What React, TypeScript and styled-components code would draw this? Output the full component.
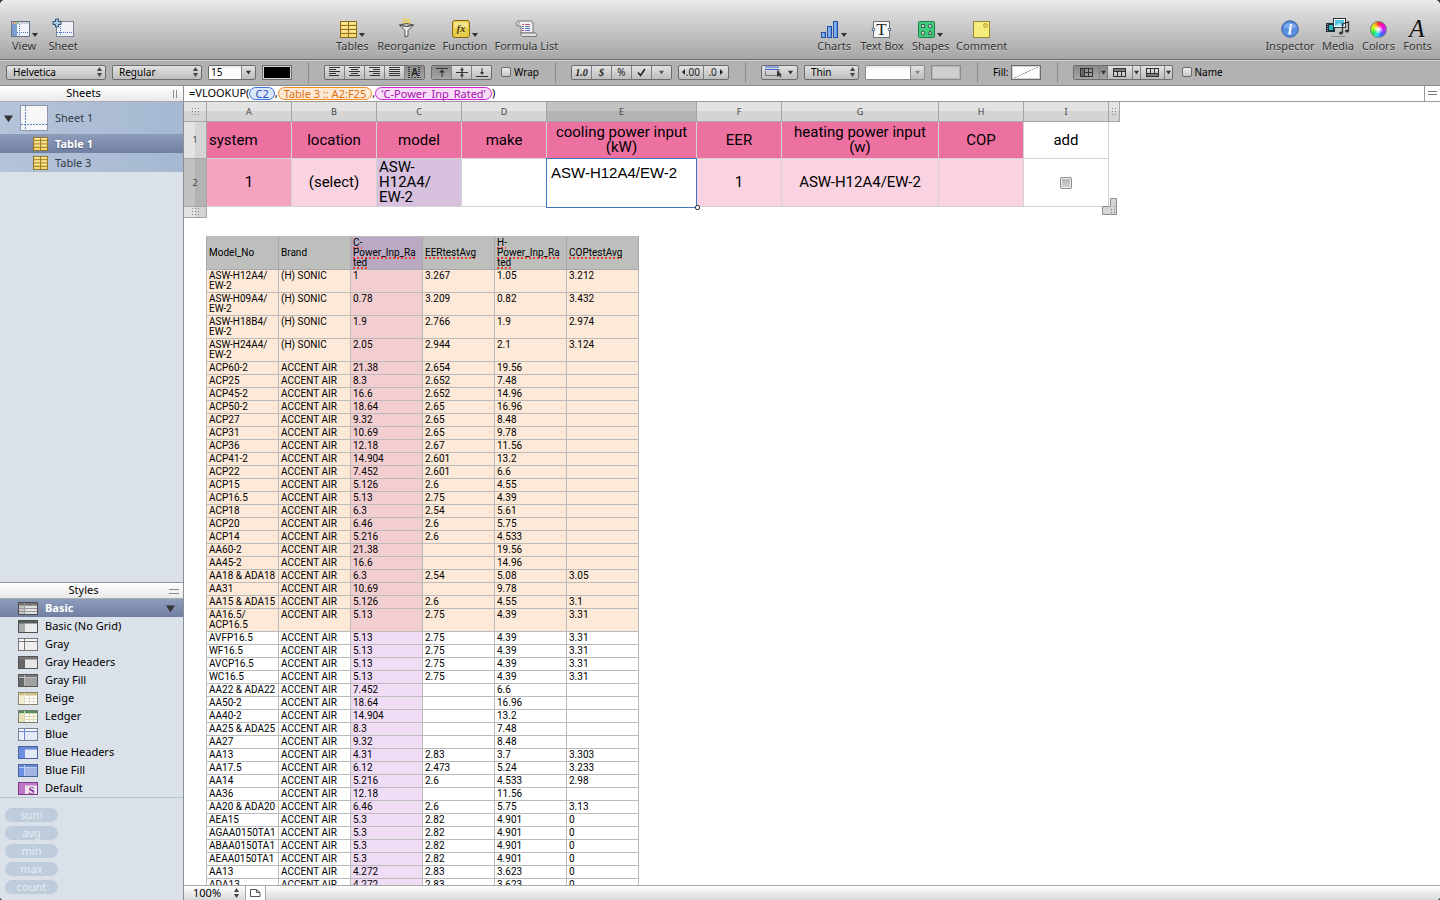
import React from "react";
import styled, { createGlobalStyle, css } from "styled-components";

const UI = `"Lucida Grande", "Noto Sans", "Open Sans", sans-serif`;
const CELL = `Roboto, "Liberation Sans", sans-serif`;

const GlobalStyle = createGlobalStyle`
  *, *::before, *::after { box-sizing: border-box; }
  html, body { margin: 0; background: #2d3240; }
  body { font-family: ${UI}; font-size: 11px; line-height: 14px; color: #000; }
  button, input, select, textarea { font: inherit; color: inherit; margin: 0; padding: 0; border-radius: 0; }
`;

/* ---------- window ---------- */
const Window = styled.div`
  display: flex;
  flex-direction: column;
  height: 100vh;
  overflow: hidden;
  background: #fff;
  border-radius: 5px 5px 4px 4px;
`;

const Toolbar = styled.header`
  display: flex;
  justify-content: space-between;
  flex: none;
  height: 60px;
  padding: 18px 4px 0 1px;
  background: linear-gradient(#ececec 0, #dcdcdc 10px, #a6a6a6 100%);
  border-bottom: 1px solid #6e6e6e;
`;

const ToolGroup = styled.div`
  display: flex;
`;

const Tool = styled.button<{ $w: number }>`
  display: flex;
  flex-direction: column;
  align-items: center;
  width: ${(p) => p.$w}px;
  height: 36px;
  border: 0;
  background: none;
  color: #333;
  white-space: nowrap;
  text-shadow: 0 1px 0 rgba(255, 255, 255, 0.45);
`;

const ToolIcon = styled.span`
  display: flex;
  align-items: flex-end;
  gap: 2px;
  height: 21px;
  padding-bottom: 1px;
  & > svg { overflow: visible; }
`;

/* ---------- format bar ---------- */
const FormatBar = styled.div`
  display: flex;
  align-items: center;
  flex: none;
  gap: 6px;
  height: 26px;
  padding: 0 6px 2px;
  background: #b2b2b2;
  border-top: 1px solid #cfcfcf;
  border-bottom: 1px solid #8b8b8b;
  font-size: 10px;
`;

const control = css`
  height: 15px;
  border: 1px solid #6d6d6d;
  border-radius: 2px;
  background: linear-gradient(#e2e2e2, #bdbdbd);
`;

const SelectBox = styled.span<{ $w: number }>`
  ${control}
  display: flex;
  align-items: center;
  width: ${(p) => p.$w}px;
  padding-right: 3px;
`;

const Select = styled.select`
  appearance: none;
  flex: 1;
  min-width: 0;
  height: 13px;
  padding-left: 6px;
  border: 0;
  background: none;
  line-height: 13px;
`;

const SizeBox = styled.span<{ $w: number; $faded?: boolean }>`
  ${control}
  display: flex;
  width: ${(p) => p.$w}px;
  ${(p) => p.$faded && "border-color: #8c8c8c;"}
`;

const SizeInput = styled.input`
  flex: 1;
  min-width: 0;
  padding-left: 2px;
  border: 0;
  border-right: 1px solid #8a8a8a;
  background: linear-gradient(#e8e8e8, #fff 4px);
  line-height: 13px;
  font-size: 10px;
`;

const MiniButton = styled.button`
  display: flex;
  align-items: center;
  justify-content: center;
  width: 13px;
  border: 0;
  background: none;
`;

const Swatch = styled.button<{ $fill: string; $faded?: boolean }>`
  width: 30px;
  height: 15px;
  border: 1px solid ${(p) => (p.$faded ? "#8c8c8c" : "#6d6d6d")};
  background: ${(p) => p.$fill};
  box-shadow: inset 0 0 0 1px ${(p) => (p.$faded ? "#b4b4b4" : "#d4d4d4")};
`;

const Divider = styled.span`
  width: 1px;
  height: 21px;
  margin: 0 9px 0 10px;
  background: #8b8b8b;
`;

const Segmented = styled.div`
  ${control}
  display: flex;
  overflow: hidden;
`;

const Segment = styled.button<{ $w?: number; $on?: boolean }>`
  display: flex;
  align-items: center;
  justify-content: center;
  width: ${(p) => p.$w ?? 20}px;
  border: 0;
  border-left: 1px solid #808080;
  background: ${(p) => (p.$on ? "linear-gradient(#8a8a8a, #a5a5a5)" : "none")};
  font-size: 10px;
  line-height: 13px;
  color: #222;
  white-space: nowrap;
  &:first-child { border-left: 0; }
`;

const Numeral = styled.i`
  font-family: "Liberation Serif", serif;
  font-weight: bold;
`;

const CheckLabel = styled.label`
  display: flex;
  align-items: center;
  gap: 3px;
  margin-left: 3px;
`;

const FillField = styled.div`
  display: flex;
  align-items: center;
  gap: 2px;
`;

const Check = styled.input`
  appearance: none;
  width: 10px;
  height: 10px;
  border: 1px solid #6a6a6a;
  border-radius: 2px;
  background: linear-gradient(#ededed, #c8c8c8);
`;

/* ---------- body ---------- */
const Body = styled.div`
  display: flex;
  flex: 1;
  min-height: 0;
`;

const Sidebar = styled.aside`
  display: flex;
  flex-direction: column;
  flex: none;
  width: 184px;
  border-right: 1px solid #8f8f8f;
  background: #dae1e9;
`;

const PaneTitle = styled.h2`
  position: relative;
  flex: none;
  height: 16px;
  margin: 0;
  background: linear-gradient(#fff, #e9e9e9);
  border-bottom: 1px solid #a9adb3;
  font-size: 11px;
  line-height: 14px;
  font-weight: normal;
  text-align: center;
  padding-right: 16px;
`;

const Grip = styled.span<{ $vertical?: boolean }>`
  position: absolute;
  right: ${(p) => (p.$vertical ? 6 : 4)}px;
  top: ${(p) => (p.$vertical ? 4 : 6)}px;
  width: ${(p) => (p.$vertical ? 4 : 10)}px;
  height: ${(p) => (p.$vertical ? 8 : 5)}px;
  border: 0 solid #8c8c8c;
  border-width: ${(p) => (p.$vertical ? "0 1px" : "1px 0")};
`;

const SheetTree = styled.ul`
  margin: 0;
  padding: 0;
  list-style: none;
  background: linear-gradient(90deg, #b4c3d9, #a6b8d2);
  color: #333b47;
`;

const SheetRow = styled.li`
  display: flex;
  align-items: center;
  gap: 6px;
  height: 32px;
  padding-left: 4px;
`;

const TableRow = styled.li<{ $on?: boolean }>`
  display: flex;
  align-items: center;
  gap: 7px;
  height: 19px;
  padding-left: 33px;
  ${(p) =>
    p.$on &&
    css`
      background: linear-gradient(#8d9cbb, #7180a2);
      color: #fff;
      font-weight: bold;
      text-shadow: 0 1px 1px #4a5878;
    `}
`;

const Spacer = styled.div`
  flex: 1;
`;

const StylesPane = styled.section`
  flex: none;
  border-top: 1px solid #8f959c;
`;

const StyleList = styled.ul`
  margin: 0;
  padding: 0;
  list-style: none;
  border-bottom: 1px solid #b8c3d1;
`;

const StyleRow = styled.li<{ $on?: boolean }>`
  display: flex;
  align-items: center;
  gap: 7px;
  height: 18px;
  padding: 0 8px 0 18px;
  ${(p) =>
    p.$on &&
    css`
      background: linear-gradient(#8d9cbb, #7180a2);
      color: #fff;
      font-weight: bold;
    `}
  & > svg:last-child:not(:first-child) { margin-left: auto; }
`;

const Pills = styled.div`
  display: flex;
  flex-direction: column;
  gap: 4px;
  flex: none;
  padding: 10px 5px 6px;
`;

const Pill = styled.button`
  width: 53px;
  height: 14px;
  border: 0;
  border-radius: 7px;
  background: #bfccdc;
  color: #e6ecf3;
  line-height: 12px;
`;

/* ---------- main ---------- */
const Main = styled.main`
  display: flex;
  flex-direction: column;
  flex: 1;
  min-width: 0;
`;

const FormulaBar = styled.div`
  display: flex;
  align-items: center;
  flex: none;
  height: 16px;
  padding: 0 0 1px 5px;
  border-bottom: 1px solid #999;
  white-space: nowrap;
`;

const Token = styled.span<{ $ink: string; $bg: string; $line: string }>`
  height: 13px;
  padding: 0 5px;
  border: 1px solid ${(p) => p.$line};
  border-radius: 7px;
  background: ${(p) => p.$bg};
  color: ${(p) => p.$ink};
  line-height: 11px;
`;

const FormulaMenu = styled.button`
  display: flex;
  align-items: center;
  justify-content: center;
  width: 16px;
  height: 15px;
  margin-left: auto;
  border: 0;
  border-left: 1px solid #999;
  background: #fff;
`;

const Canvas = styled.div`
  flex: 1;
  min-height: 0;
  overflow: hidden;
`;

const Grid = styled.table`
  table-layout: fixed;
  width: 936px;
  border-collapse: separate;
  border-spacing: 0;
  font-family: ${CELL};
  font-size: 15px;
  line-height: 15px;
`;

const Handle = styled.th<{ $on?: boolean; $row?: boolean }>`
  height: ${(p) => (p.$row ? "auto" : "20px")};
  padding: 0;
  border-right: 1px solid #a5a5a5;
  border-bottom: 1px solid #a5a5a5;
  background: ${(p) => {
    const dir = p.$row ? "90deg, " : "";
    return p.$on
      ? `linear-gradient(${dir}#c2c2c2 50%, #b3b3b3 50%)`
      : `linear-gradient(${dir}#e3e3e3 50%, #d4d4d4 50%)`;
  }};
  color: #444;
  font-family: ${UI};
  font-size: 9px;
  font-weight: normal;
  line-height: 10px;
  vertical-align: middle;
  & > svg { display: block; margin: 0 auto; }
`;

const GCell = styled.td<{ $bg: string; $h: number; $align?: string }>`
  position: relative;
  height: ${(p) => p.$h}px;
  padding: 0 2px;
  border-right: 1px solid #d3d3d3;
  border-bottom: 1px solid #d3d3d3;
  background: ${(p) => p.$bg};
  text-align: ${(p) => p.$align ?? "center"};
  vertical-align: middle;
`;

const EditBox = styled.textarea`
  position: absolute;
  left: -1px;
  top: -1px;
  width: calc(100% + 2px);
  height: calc(100% + 3px);
  padding: 5px 4px;
  border: 1px solid #3f74bd;
  background: #fff;
  font-family: "Liberation Sans", Helvetica, sans-serif;
  font-size: 15px;
  line-height: 18px;
  resize: none;
  overflow: hidden;
  display: block;
`;

const EditKnob = styled.span`
  position: absolute;
  right: -4px;
  bottom: -4px;
  z-index: 2;
  width: 5px;
  height: 5px;
  border: 1px solid #333;
  border-radius: 2px;
  background: #fff;
`;

const CellCheck = styled.input`
  appearance: none;
  display: block;
  width: 12px;
  height: 12px;
  margin: 0 auto;
  border: 1px solid #8c8c8c;
  border-radius: 2px;
  background: linear-gradient(#b0b0b0, #d6d6d6);
  box-shadow: inset 0 0 0 1px #ececec;
`;

const Corner = styled.span`
  position: absolute;
  right: -9px;
  bottom: -9px;
  display: block;
  width: 15px;
  height: 17px;
  z-index: 1;
  & > svg { display: block; }
`;

const Data = styled.table`
  table-layout: fixed;
  width: 433px;
  margin: 18px 0 0 22px;
  border-collapse: collapse;
  font-family: ${CELL};
  font-size: 10px;
  line-height: 10px;
`;

const DHead = styled.th<{ $c?: boolean }>`
  height: 33px;
  padding: 1px 2px;
  border: 1px solid #a8a9a8;
  border-top-color: #bdbfbd;
  background: ${(p) => (p.$c ? "#baa9c2" : "#bdbfbd")};
  font-weight: normal;
  text-align: left;
  vertical-align: middle;
  white-space: nowrap;
`;

const Misspelt = styled.span`
  text-decoration: underline dotted #e8452f 2px;
  text-underline-offset: 1px;
  text-decoration-skip-ink: none;
`;

const DCell = styled.td<{ $bg: string }>`
  height: 13px;
  padding: 1px 2px;
  border: 1px solid #bbb;
  background: ${(p) => p.$bg};
  vertical-align: top;
  white-space: nowrap;
`;

const StatusBar = styled.footer`
  display: flex;
  align-items: center;
  flex: none;
  height: 15px;
  border-top: 1px solid #a8a8a8;
  background: linear-gradient(#fff, #d9d9d9);
`;

const Zoom = styled.label`
  display: flex;
  align-items: center;
  justify-content: space-between;
  width: 62px;
  height: 14px;
  padding: 0 6px 0 9px;
  border-right: 1px solid #a8a8a8;
`;

const ZoomSelect = styled.select`
  appearance: none;
  width: 36px;
  border: 0;
  background: none;
  line-height: 14px;
`;

const PageButton = styled.button`
  display: flex;
  align-items: center;
  justify-content: center;
  width: 20px;
  height: 14px;
  border: 0;
  border-right: 1px solid #a8a8a8;
  background: #fff;
`;

/* ---------- drawings ---------- */
const Down = ({ size = 6, fill = "#333" }: { size?: number; fill?: string }) => (
  <svg width={size} height={size} viewBox="0 0 6 6"><path d="M0 1h6L3 5.5z" fill={fill} /></svg>
);
const MenuArrow = () => (
  <svg width="6" height="8" viewBox="0 0 6 8"><path d="M0 3h6L3 7z" fill="#333" /></svg>
);
const UpDown = () => (
  <svg width="5" height="10" viewBox="0 0 5 10"><path d="M0 4l2.500-4L5 4zM0 6l2.500 4L5 6z" fill="#444" /></svg>
);
const Dots = ({ w = 9, h = 9 }: { w?: number; h?: number }) => (
  <svg width={w} height={h} fill="#888">
    {[0, 3, 6].filter((y) => y < h - 1).map((y) =>
      [0, 3, 6].filter((x) => x < w - 1).map((x) => <rect key={`${x}-${y}`} x={x + 1} y={y + 1} width="1" height="1" />)
    )}
  </svg>
);

const ViewIcon = () => (
  <svg width="19" height="18" viewBox="0 0 19 18">
    <rect x=".5" y="1.500" width="18" height="15" fill="#f1f3f8" stroke="#66728a" />
    <path d="M1 2h17v2H1z" fill="#cfd2d8" />
    <rect x="1" y="4" width="5" height="12" fill="#7c9dd2" />
    <circle cx="2.500" cy="3" r=".8" fill="#d33" /><circle cx="4.500" cy="3" r=".8" fill="#da3" /><circle cx="6.500" cy="3" r=".8" fill="#3a3" />
    <path d="M8.500 4v12M6 12.500h12" stroke="#4a72cf" strokeDasharray="1 1" />
  </svg>
);
const SheetIcon = () => (
  <svg width="23" height="20" viewBox="0 0 23 20">
    <rect x="4.500" y="3.500" width="17" height="15" fill="#eef0f5" stroke="#7b8798" />
    <path d="M8.500 4v14M5 14.500h16" stroke="#4a72cf" strokeDasharray="1 1" />
    <path d="M3.500 1h3v2.500H9v3H6.500V9h-3V6.500H1v-3h2.500z" fill="#a5c4e0" stroke="#2f4f73" />
  </svg>
);
const TableIcon = ({ w = 17, h = 17 }: { w?: number; h?: number }) => (
  <svg width={w} height={h} viewBox="0 0 17 17" preserveAspectRatio="none">
    <rect x=".5" y=".5" width="16" height="16" fill="#f3d873" stroke="#8b6a17" />
    <path d="M1 4.500h15M1 8.500h15M1 12.500h15M8.500 1v15" stroke="#94701d" fill="none" />
    <path d="M2 2h6M10 2h6M2 6h6M10 6h6M2 10h6M10 10h6" stroke="#fff2b4" />
  </svg>
);
const FunnelIcon = () => (
  <svg width="17" height="21" viewBox="0 0 17 21">
    <g fill="#f6e36a" stroke="#d9b92c" strokeWidth=".4">
      <circle cx="7" cy="2" r="1.300" /><circle cx="10.500" cy="3" r="1.300" /><circle cx="6" cy="5" r="1.300" /><circle cx="9" cy="6" r="1.300" /><circle cx="11.500" cy="6" r="1" />
    </g>
    <path d="M1.500 8Q8.500 11 15.500 8L10 13.500V19L7 20V13.500z" fill="#e6e6e6" stroke="#555" />
    <path d="M1.500 8Q8.500 5 15.500 8Q8.500 11 1.500 8z" fill="#c4c4c4" fillOpacity=".4" stroke="#555" />
    <path d="M8.500 11v7" stroke="#fff" />
  </svg>
);
const FunctionIcon = () => (
  <svg width="18" height="18" viewBox="0 0 18 18">
    <rect x=".5" y=".5" width="17" height="17" rx="2.500" fill="#e7cc48" stroke="#8b6a17" />
    <path d="M2 2h14v6H2z" fill="#f4e289" />
    <text x="9" y="12" textAnchor="middle" fontFamily="Liberation Serif" fontStyle="italic" fontWeight="bold" fontSize="10" fill="#4a3708">fx</text>
  </svg>
);
const ScrollIcon = () => (
  <svg width="23" height="18" viewBox="0 0 23 18">
    <path d="M3 1h13q2 0 2 3v9H6V6H2Q0 3 3 1z" fill="#f0f0f0" stroke="#777" />
    <path d="M2 6q3-1 2-4" stroke="#888" fill="none" />
    <path d="M6 13h14.500q2 1 1 3.500H7.500Q5 16 6 13z" fill="#e4e4e4" stroke="#777" />
    <path d="M7 4.500h2M10 4.500h5M7 10.500h2" stroke="#c5527d" /><path d="M7 6.500h2M10 6.500h5" stroke="#4f8a8a" /><path d="M7 8.500h2M10 8.500h5M10 10.500h5" stroke="#5d70cf" />
  </svg>
);
const ChartIcon = () => (
  <svg width="18" height="18" viewBox="0 0 18 18" fill="#5f97e4" stroke="#24509f">
    <rect x=".5" y="12.500" width="4" height="5" /><rect x="6.500" y="6.500" width="4" height="11" /><rect x="12.500" y="1.500" width="4" height="16" />
    <path d="M2 13v4M8 7v10M14 2v15" stroke="#a5ccfa" />
  </svg>
);
const TextBoxIcon = () => (
  <svg width="20" height="18" viewBox="0 0 20 18">
    <rect x="1.500" y="1.500" width="16" height="16" fill="#f8f8f8" stroke="#68717e" />
    <text x="9.500" y="15" textAnchor="middle" fontFamily="Liberation Serif" fontSize="17" fill="#222">T</text>
    <circle cx="1.500" cy="9.500" r="1.300" fill="#fff" stroke="#2f4a70" /><circle cx="17.500" cy="9.500" r="1.300" fill="#fff" stroke="#2f4a70" />
  </svg>
);
const ShapesIcon = () => (
  <svg width="17" height="18" viewBox="0 0 17 18">
    <rect x=".5" y="1.500" width="16" height="16" rx="1" fill="#41cb7c" stroke="#1f7d47" />
    <g fill="#d4d8d4" stroke="#35664a">
      <rect x="3.500" y="4.500" width="3" height="3" /><circle cx="12" cy="6" r="1.800" /><circle cx="5" cy="13" r="1.800" /><path d="M10 14.500l2-4 2 4z" />
    </g>
  </svg>
);
const CommentIcon = () => (
  <svg width="17" height="18" viewBox="0 0 17 18">
    <rect x=".5" y="1.500" width="16" height="16" fill="#f5ec7c" stroke="#98873a" />
    <circle cx="12.500" cy="5.500" r="2" fill="none" stroke="#c2a136" /><path d="M11 4l3 3M14 4l-3 3" stroke="#c2a136" strokeWidth=".7" />
  </svg>
);
const InspectorIcon = () => (
  <svg width="18" height="18" viewBox="0 0 18 18">
    <circle cx="9" cy="9" r="8.200" fill="#5a90e0" stroke="#315ba5" />
    <path d="M2.500 7a7 6 0 0 1 13 0q-6 3-13 0z" fill="#82aced" />
    <text x="9" y="14" textAnchor="middle" fontFamily="Liberation Serif" fontStyle="italic" fontWeight="bold" fontSize="14" fill="#fff">i</text>
  </svg>
);
const MediaIcon = () => (
  <svg width="24" height="21" viewBox="0 0 24 21">
    <rect y="6" width="9" height="9" fill="#17323e" /><rect x="3" y="8" width="4" height="5" fill="#2bb5bd" />
    <path d="M1.500 7v8" stroke="#d46aa5" strokeDasharray="1 1" />
    <rect x="7.500" y="1.500" width="12" height="9" fill="#fff" stroke="#23343f" /><rect x="9" y="3" width="9" height="6" fill="#53c0e4" />
    <path d="M9 9l4-3 5 3z" fill="#a7e4f5" />
    <path d="M16.500 16V7l6-2v9" stroke="#333" fill="none" strokeWidth="1.300" />
    <ellipse cx="15" cy="16" rx="2" ry="1.600" fill="#333" /><ellipse cx="21" cy="14" rx="2" ry="1.600" fill="#333" />
    <path d="M5 19.500h14" stroke="#8e8e8e" />
  </svg>
);
const Wheel = styled.span`
  width: 17px;
  height: 17px;
  border-radius: 50%;
  border: 1px solid #777;
  background: radial-gradient(#fff 5%, rgba(255, 255, 255, 0) 45%),
    conic-gradient(#f33, #f0c 45deg, #a3f 100deg, #36f 150deg, #2df 190deg, #2e4 240deg, #cf2 290deg, #fb1 325deg, #f33);
`;
const FontsIcon = () => (
  <svg width="18" height="20" viewBox="0 0 18 20">
    <text x="9" y="19" textAnchor="middle" fontFamily="Liberation Serif" fontStyle="italic" fontSize="25" fill="#111">A</text>
  </svg>
);
const SheetThumb = () => (
  <svg width="30" height="28" viewBox="0 0 30 28">
    <rect x="1.500" y="1.500" width="27" height="25" fill="#f7f7f7" stroke="#8d99ab" />
    <path d="M6.500 2v24M2 20.500h26" stroke="#5e7fcb" strokeDasharray="2 1" />
  </svg>
);

const Lines = ({ rows }: { rows: [number, number][] }) => (
  <svg width="12" height="10" viewBox="0 0 12 10" stroke="#333">
    {rows.map(([x, w], i) => <path key={i} d={`M${x} ${i * 2 + 0.5}h${w}`} />)}
  </svg>
);
const left: [number, number][] = [[0, 11], [0, 7], [0, 11], [0, 7], [0, 10]];
const center: [number, number][] = [[0, 11], [2, 7], [0, 11], [2, 7], [0, 11]];
const right: [number, number][] = [[0, 11], [4, 7], [0, 11], [4, 7], [1, 10]];
const full: [number, number][] = [[0, 11], [0, 11], [0, 11], [0, 11], [0, 11]];

const AutoAlign = () => (
  <svg width="13" height="11" viewBox="0 0 13 11">
    <path d="M0 .5h3M10 .5h3M0 2.500h3M10 2.500h3M0 4.500h3M10 4.500h3M0 6.500h3M10 6.500h3M0 8.500h3M10 8.500h3M0 10.500h13" stroke="#333" strokeDasharray="2 1" />
    <text x="6.500" y="9" textAnchor="middle" fontFamily="Liberation Sans" fontWeight="bold" fontSize="10" fill="#222">A</text>
  </svg>
);
const VTop = () => <svg width="12" height="11" stroke="#333"><path d="M0 1.500h12M6 3v7" /><path d="M3 5.500L6 2.500l3 3z" fill="#333" stroke="none" /></svg>;
const VMid = () => <svg width="12" height="11" stroke="#333"><path d="M0 5.500h12M6 0v11" /><path d="M4 2l2 2.500L8 2zM4 9l2-2.500L8 9z" fill="#333" stroke="none" /></svg>;
const VBot = () => <svg width="12" height="11" stroke="#333"><path d="M0 9.500h12M6 1v6" /><path d="M4 5l2 3 2-3z" fill="#333" stroke="none" /></svg>;
const Tick = () => <svg width="9" height="9" viewBox="0 0 9 9"><path d="M1 4.500l2.500 3L8 1" stroke="#222" strokeWidth="1.600" fill="none" /></svg>;
const BorderPick = () => (
  <svg width="18" height="12" viewBox="0 0 18 12">
    <path d="M0 1h14M0 3.500h14" stroke="#3f62d4" strokeWidth="1.200" /><path d="M.5 5v4.500H12M14 3v3" stroke="#777" fill="none" />
    <path d="M12 4v7l2-1.500 1.500 2 1-1-1.200-1.600H17z" fill="#333" />
  </svg>
);
const TableGlyph = ({ kind }: { kind: 0 | 1 | 2 }) => (
  <svg width="13" height="9" viewBox="0 0 13 9" fill="none" stroke="#333">
    {kind === 0 && <rect x="0" y="0" width="5" height="9" fill="#666" stroke="none" />}
    {kind === 1 && <rect x="0" y="0" width="13" height="3" fill="#777" stroke="none" />}
    {kind === 2 && <rect x="0" y="6" width="13" height="3" fill="#777" stroke="none" />}
    <rect x=".5" y=".5" width="12" height="8" />
    {kind === 0 && <path d="M4.500 0v9M8.500 0v9M4 4.500h9" />}
    {kind === 1 && <path d="M0 3.500h13M4.500 3v6M8.500 3v6" />}
    {kind === 2 && <path d="M0 5.500h13M4.500 0v6M8.500 0v6" />}
  </svg>
);

type Look = { name: string; line: string; top: string; side: string; fill: string; rule?: string; grid?: boolean; s?: boolean };
const looks: Look[] = [
  { name: "Basic", line: "#4b4b4b", top: "#777", side: "#c4c4c4", fill: "#e2e2e2", rule: "#999", grid: true },
  { name: "Basic (No Grid)", line: "#4b514e", top: "#59615d", side: "#a8adab", fill: "#e9ebec" },
  { name: "Gray", line: "#777", top: "#f6f6f6", side: "#f1f1f1", fill: "#ededed", rule: "#777" },
  { name: "Gray Headers", line: "#555", top: "#777", side: "#666", fill: "#e6e6e6" },
  { name: "Gray Fill", line: "#555", top: "#777", side: "#666", fill: "#a2a2a2", rule: "#bbb" },
  { name: "Beige", line: "#8b8670", top: "#cfc088", side: "#f5eed2", fill: "#fff", grid: true, rule: "#e5dfc7" },
  { name: "Ledger", line: "#77806c", top: "#4e8f65", side: "#e9e1b7", fill: "#fff", grid: true, rule: "#dfd7ae" },
  { name: "Blue", line: "#7a8194", top: "#f4f6fb", side: "#eaeef9", fill: "#e5eaf7", rule: "#7088cc" },
  { name: "Blue Headers", line: "#48639f", top: "#6688d6", side: "#6c90e0", fill: "#e3e8f5" },
  { name: "Blue Fill", line: "#48639f", top: "#6688d6", side: "#6c90e0", fill: "#a3b4e4", rule: "#c0ccf0" },
  { name: "Default", line: "#7d3a86", top: "#c17cc7", side: "#bd77c4", fill: "#f1e2f2", s: true },
];

const StyleGlyph = ({ l }: { l: Look }) => (
  <svg width="20" height="13" viewBox="0 0 20 13">
    <rect x="0" y="0" width="20" height="13" fill={l.fill} />
    <rect x="0" y="3" width="7" height="10" fill={l.side} />
    <rect x="0" y="0" width="20" height="3.500" fill={l.top} />
    {l.rule && <path d="M6.500 1v12M0 3.500h20" stroke={l.rule} />}
    {l.grid && <path d={l.name === "Basic" ? "M1 6.500h18M1 9.500h18" : "M7 6.500h12M7 9.500h12"} stroke={l.rule} />}
    {l.grid && l.name !== "Basic" && <path d="M11.500 4v8M15.500 4v8" stroke={l.rule} />}
    {l.s && <text x="13.500" y="12" textAnchor="middle" fontFamily="Liberation Serif" fontWeight="bold" fontSize="11" fill="#7d2f88">S</text>}
    <rect x=".5" y=".5" width="19" height="12" fill="none" stroke={l.line} />
  </svg>
);

/* ---------- data ---------- */
const A = "ACCENT AIR";
const rows: string[][] = [
  ["ASW-H12A4/|EW-2", "(H) SONIC", "1", "3.267", "1.05", "3.212"],
  ["ASW-H09A4/|EW-2", "(H) SONIC", "0.78", "3.209", "0.82", "3.432"],
  ["ASW-H18B4/|EW-2", "(H) SONIC", "1.9", "2.766", "1.9", "2.974"],
  ["ASW-H24A4/|EW-2", "(H) SONIC", "2.05", "2.944", "2.1", "3.124"],
  ["ACP60-2", A, "21.38", "2.654", "19.56", ""],
  ["ACP25", A, "8.3", "2.652", "7.48", ""],
  ["ACP45-2", A, "16.6", "2.652", "14.96", ""],
  ["ACP50-2", A, "18.64", "2.65", "16.96", ""],
  ["ACP27", A, "9.32", "2.65", "8.48", ""],
  ["ACP31", A, "10.69", "2.65", "9.78", ""],
  ["ACP36", A, "12.18", "2.67", "11.56", ""],
  ["ACP41-2", A, "14.904", "2.601", "13.2", ""],
  ["ACP22", A, "7.452", "2.601", "6.6", ""],
  ["ACP15", A, "5.126", "2.6", "4.55", ""],
  ["ACP16.5", A, "5.13", "2.75", "4.39", ""],
  ["ACP18", A, "6.3", "2.54", "5.61", ""],
  ["ACP20", A, "6.46", "2.6", "5.75", ""],
  ["ACP14", A, "5.216", "2.6", "4.533", ""],
  ["AA60-2", A, "21.38", "", "19.56", ""],
  ["AA45-2", A, "16.6", "", "14.96", ""],
  ["AA18 & ADA18", A, "6.3", "2.54", "5.08", "3.05"],
  ["AA31", A, "10.69", "", "9.78", ""],
  ["AA15 & ADA15", A, "5.126", "2.6", "4.55", "3.1"],
  ["AA16.5/|ACP16.5", A, "5.13", "2.75", "4.39", "3.31"],
  ["AVFP16.5", A, "5.13", "2.75", "4.39", "3.31"],
  ["WF16.5", A, "5.13", "2.75", "4.39", "3.31"],
  ["AVCP16.5", A, "5.13", "2.75", "4.39", "3.31"],
  ["WC16.5", A, "5.13", "2.75", "4.39", "3.31"],
  ["AA22 & ADA22", A, "7.452", "", "6.6", ""],
  ["AA50-2", A, "18.64", "", "16.96", ""],
  ["AA40-2", A, "14.904", "", "13.2", ""],
  ["AA25 & ADA25", A, "8.3", "", "7.48", ""],
  ["AA27", A, "9.32", "", "8.48", ""],
  ["AA13", A, "4.31", "2.83", "3.7", "3.303"],
  ["AA17.5", A, "6.12", "2.473", "5.24", "3.233"],
  ["AA14", A, "5.216", "2.6", "4.533", "2.98"],
  ["AA36", A, "12.18", "", "11.56", ""],
  ["AA20 & ADA20", A, "6.46", "2.6", "5.75", "3.13"],
  ["AEA15", A, "5.3", "2.82", "4.901", "0"],
  ["AGAA0150TA1", A, "5.3", "2.82", "4.901", "0"],
  ["ABAA0150TA1", A, "5.3", "2.82", "4.901", "0"],
  ["AEAA0150TA1", A, "5.3", "2.82", "4.901", "0"],
  ["AA13", A, "4.272", "2.83", "3.623", "0"],
  ["ADA13", A, "4.272", "2.83", "3.623", "0"],
];
const SHADED = 24;

const breakLines = (s: string) =>
  s.split("|").map((part, i) => (
    <React.Fragment key={i}>{i > 0 && <br />}{part}</React.Fragment>
  ));

const PINK = "#ed71a0";
const PALE = "#f9d3e1";

const ToolItem = ({ w, label, menu, children }: { w: number; label: string; menu?: boolean; children: React.ReactNode }) => (
  <Tool $w={w}>
    <ToolIcon>{children}{menu && <MenuArrow />}</ToolIcon>
    {label}
  </Tool>
);

export default function App() {
  return (
    <Window>
      <GlobalStyle />
      <Toolbar>
        <ToolGroup>
          <ToolItem w={46} label="View" menu><ViewIcon /></ToolItem>
          <ToolItem w={32} label="Sheet"><SheetIcon /></ToolItem>
        </ToolGroup>
        <ToolGroup>
          <ToolItem w={44} label="Tables" menu><TableIcon /></ToolItem>
          <ToolItem w={64} label="Reorganize"><FunnelIcon /></ToolItem>
          <ToolItem w={53} label="Function" menu><FunctionIcon /></ToolItem>
          <ToolItem w={70} label="Formula List"><ScrollIcon /></ToolItem>
        </ToolGroup>
        <ToolGroup>
          <ToolItem w={43} label="Charts" menu><ChartIcon /></ToolItem>
          <ToolItem w={53} label="Text Box"><TextBoxIcon /></ToolItem>
          <ToolItem w={44} label="Shapes" menu><ShapesIcon /></ToolItem>
          <ToolItem w={58} label="Comment"><CommentIcon /></ToolItem>
        </ToolGroup>
        <ToolGroup>
          <ToolItem w={56} label="Inspector"><InspectorIcon /></ToolItem>
          <ToolItem w={40} label="Media"><MediaIcon /></ToolItem>
          <ToolItem w={41} label="Colors"><Wheel /></ToolItem>
          <ToolItem w={37} label="Fonts"><FontsIcon /></ToolItem>
        </ToolGroup>
      </Toolbar>

      <FormatBar>
        <SelectBox $w={100}><Select aria-label="Font"><option>Helvetica</option></Select><UpDown /></SelectBox>
        <SelectBox $w={90}><Select aria-label="Typeface"><option>Regular</option></Select><UpDown /></SelectBox>
        <SizeBox $w={48}><SizeInput aria-label="Font size" defaultValue="15" /><MiniButton aria-label="Sizes"><Down size={5} /></MiniButton></SizeBox>
        <Swatch $fill="#000" aria-label="Text color" />
        <Divider />
        <Segmented>
          <Segment $w={19} aria-label="Align left"><Lines rows={left} /></Segment>
          <Segment aria-label="Center"><Lines rows={center} /></Segment>
          <Segment aria-label="Align right"><Lines rows={right} /></Segment>
          <Segment aria-label="Justify"><Lines rows={full} /></Segment>
          <Segment aria-label="Automatic" $on><AutoAlign /></Segment>
        </Segmented>
        <Segmented>
          <Segment $w={19} aria-label="Top" $on><VTop /></Segment>
          <Segment aria-label="Middle"><VMid /></Segment>
          <Segment aria-label="Bottom"><VBot /></Segment>
        </Segmented>
        <CheckLabel><Check type="checkbox" />Wrap</CheckLabel>
        <Divider />
        <Segmented>
          <Segment $w={19}><Numeral>1.0</Numeral></Segment>
          <Segment><Numeral>$</Numeral></Segment>
          <Segment>%</Segment>
          <Segment aria-label="Checkbox"><Tick /></Segment>
          <Segment aria-label="More formats"><Down size={5} fill="#555" /></Segment>
        </Segmented>
        <Segmented>
          <Segment $w={24}><svg width="4" height="6"><path d="M3 0v6L0 3z" fill="#222" /></svg>.00</Segment>
          <Segment $w={25}>.0&nbsp;<svg width="4" height="6"><path d="M1 0v6l3-3z" fill="#222" /></svg></Segment>
        </Segmented>
        <Divider />
        <Segmented>
          <Segment $w={35} aria-label="Borders"><BorderPick />&nbsp;&nbsp;<Down size={5} /></Segment>
        </Segmented>
        <SelectBox $w={55}><Select aria-label="Line"><option>Thin</option></Select><UpDown /></SelectBox>
        <SizeBox $w={60} $faded><SizeInput aria-label="Line width" /><MiniButton aria-label="Widths"><Down size={5} fill="#888" /></MiniButton></SizeBox>
        <Swatch $fill="#cfcfcf" $faded aria-label="Line color" />
        <Divider />
        <FillField>
          <span>Fill:</span>
          <Swatch $fill="linear-gradient(155deg, #fff 48%, #999 49%, #999 51%, #fff 52%)" aria-label="Fill color" />
        </FillField>
        <Divider />
        <Segmented>
          <Segment $w={25} $on aria-label="Header columns"><TableGlyph kind={0} /></Segment>
          <Segment $w={8} $on aria-label="Header column count"><Down size={5} /></Segment>
          <Segment $w={25} aria-label="Header rows"><TableGlyph kind={1} /></Segment>
          <Segment $w={8} aria-label="Header row count"><Down size={5} /></Segment>
          <Segment $w={24} aria-label="Footer rows"><TableGlyph kind={2} /></Segment>
          <Segment $w={8} aria-label="Footer row count"><Down size={5} /></Segment>
        </Segmented>
        <CheckLabel><Check type="checkbox" />Name</CheckLabel>
      </FormatBar>

      <Body>
        <Sidebar>
          <PaneTitle>Sheets<Grip $vertical /></PaneTitle>
          <SheetTree>
            <SheetRow><Down size={9} /><SheetThumb />Sheet 1</SheetRow>
            <TableRow $on><TableIcon w={15} h={14} />Table 1</TableRow>
            <TableRow><TableIcon w={15} h={14} />Table 3</TableRow>
          </SheetTree>
          <Spacer />
          <StylesPane>
            <PaneTitle>Styles<Grip /></PaneTitle>
            <StyleList>
              {looks.map((l, i) => (
                <StyleRow key={l.name} $on={i === 0}>
                  <StyleGlyph l={l} />{l.name}{i === 0 && <Down size={9} />}
                </StyleRow>
              ))}
            </StyleList>
          </StylesPane>
          <Pills>
            {["sum", "avg", "min", "max", "count"].map((p) => <Pill key={p}>{p}</Pill>)}
          </Pills>
        </Sidebar>

        <Main>
          <FormulaBar>
            =VLOOKUP(
            <Token $ink="#2550b8" $bg="#dce7fc" $line="#3b6fe0">C2</Token>,
            <Token $ink="#e0700d" $bg="#fde9d5" $line="#f08c1e">Table 3 :: A2:F25</Token>,
            <Token $ink="#a712ad" $bg="#f8dcf9" $line="#cf22d6">'C-Power_Inp_Rated'</Token>)
            <FormulaMenu aria-label="Formula menu"><svg width="9" height="4" fill="#777"><path d="M0 0h9v1H0zM0 3h9v1H0z" /></svg></FormulaMenu>
          </FormulaBar>
          <Canvas>
            <Grid>
              <colgroup>
                {[23, 85, 85, 85, 85, 150, 85, 157, 85, 85, 11].map((w, i) => <col key={i} width={w} />)}
              </colgroup>
              <thead>
                <tr>
                  <Handle><Dots /></Handle>
                  {"ABCDEFGHI".split("").map((c) => <Handle key={c} $on={c === "E"} scope="col">{c}</Handle>)}
                  <Handle><Dots w={7} /></Handle>
                </tr>
              </thead>
              <tbody>
                <tr>
                  <Handle $row scope="row">1</Handle>
                  <GCell $h={37} $bg={PINK} $align="left">system</GCell>
                  <GCell $h={37} $bg={PINK}>location</GCell>
                  <GCell $h={37} $bg={PINK}>model</GCell>
                  <GCell $h={37} $bg={PINK}>make</GCell>
                  <GCell $h={37} $bg={PINK}>cooling power input<br />(kW)</GCell>
                  <GCell $h={37} $bg={PINK}>EER</GCell>
                  <GCell $h={37} $bg={PINK}>heating power input<br />(w)</GCell>
                  <GCell $h={37} $bg={PINK}>COP</GCell>
                  <GCell $h={37} $bg="#fff">add</GCell>
                </tr>
                <tr>
                  <Handle $row $on scope="row">2</Handle>
                  <GCell $h={48} $bg="#f4a4c1">1</GCell>
                  <GCell $h={48} $bg={PALE}>(select)</GCell>
                  <GCell $h={48} $bg="#d7c1df" $align="left">ASW-<br />H12A4/<br />EW-2</GCell>
                  <GCell $h={48} $bg="#fff" />
                  <GCell $h={48} $bg="#fff">
                    <EditBox aria-label="Cell E2" defaultValue="ASW-H12A4/EW-2" />
                    <EditKnob />
                  </GCell>
                  <GCell $h={48} $bg={PALE}>1</GCell>
                  <GCell $h={48} $bg={PALE}>ASW-H12A4/EW-2</GCell>
                  <GCell $h={48} $bg={PALE} />
                  <GCell $h={48} $bg="#fff">
                    <CellCheck type="checkbox" aria-label="add" />
                    <Corner>
                      <svg width="15" height="17" viewBox="0 0 15 17">
                        <path d="M8.500.500h6v16h-14v-8h8z" fill="#d6d6d6" stroke="#8e8e8e" />
                        <path d="M9 11h1v1H9zM12 11h1v1h-1zM9 14h1v1H9zM12 14h1v1h-1zM12 8h1v1h-1z" fill="#777" />
                      </svg>
                    </Corner>
                  </GCell>
                </tr>
                <tr>
                  <Handle $row><Dots h={10} /></Handle>
                </tr>
              </tbody>
            </Grid>
            <Data>
              <colgroup>
                {[0, 1, 2, 3, 4, 5].map((i) => <col key={i} width={72} />)}
              </colgroup>
              <thead>
                <tr>
                  <DHead>Model_No</DHead>
                  <DHead>Brand</DHead>
                  <DHead $c><Misspelt>C-<br />Power_Inp_Ra<br />ted</Misspelt></DHead>
                  <DHead><Misspelt>EERtestAvg</Misspelt></DHead>
                  <DHead><Misspelt>H-<br />Power_Inp_Ra<br />ted</Misspelt></DHead>
                  <DHead><Misspelt>COPtestAvg</Misspelt></DHead>
                </tr>
              </thead>
              <tbody>
                {rows.map((r, i) => (
                  <tr key={i}>
                    {r.map((v, j) => (
                      <DCell
                        key={j}
                        $bg={i < SHADED ? (j === 2 ? "#f2ced1" : "#fce9d7") : j === 2 ? "#f1dcf6" : "#fff"}
                      >
                        {breakLines(v)}
                      </DCell>
                    ))}
                  </tr>
                ))}
              </tbody>
            </Data>
          </Canvas>
          <StatusBar>
            <Zoom>
              <ZoomSelect aria-label="Zoom"><option>100%</option></ZoomSelect>
              <UpDown />
            </Zoom>
            <PageButton aria-label="Print view">
              <svg width="11" height="8" viewBox="0 0 11 8"><path d="M.5.500h6l3.500 3v4H.5zM6.500.500v3H10" fill="#fff" stroke="#555" /></svg>
            </PageButton>
          </StatusBar>
        </Main>
      </Body>
    </Window>
  );
}
